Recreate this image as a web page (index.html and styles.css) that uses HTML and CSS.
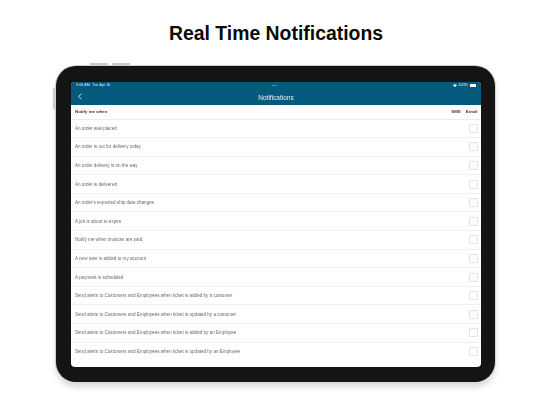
FILE: index.html
```html
<!DOCTYPE html>
<html lang="en">
<head>
<meta charset="utf-8">
<title>Real Time Notifications</title>
<link rel="stylesheet" href="styles.css">
</head>
<body>
<main class="page">
  <h1 class="title">Real Time Notifications</h1>
  <div class="device">
    <span class="btn btn-top-a"></span>
    <span class="btn btn-top-b"></span>
    <span class="btn btn-side"></span>
    <div class="screen">
      <header class="appbar">
        <div class="status">
          <span>9:06 AM&nbsp; Tue Apr 16</span>
          <span class="dots">•••</span>
          <span class="status-right">
            <svg class="wifi" viewBox="0 0 10 8"><path d="M5 8 0 2.600C2.900-.4 7.100-.4 10 2.600z"/></svg>
            <span>100%</span>
            <span class="battery"></span>
          </span>
        </div>
        <div class="nav">
          <svg class="back" viewBox="0 0 6 10"><path d="M5 1 1 5l4 4"/></svg>
          <span class="nav-title">Notifications</span>
        </div>
      </header>
      <div class="thead">
        <span class="thead-label">Notify me when</span>
        <span class="thead-sms">SMS</span>
        <span class="thead-email">Email</span>
      </div>
      <ul class="rows">
        <li class="row"><span>An order was placed</span><i class="check"></i></li>
        <li class="row"><span>An order is out for delivery today</span><i class="check"></i></li>
        <li class="row"><span>An order delivery is on the way</span><i class="check"></i></li>
        <li class="row"><span>An order is delivered</span><i class="check"></i></li>
        <li class="row"><span>An order's expected ship date changes</span><i class="check"></i></li>
        <li class="row"><span>A job is about to expire</span><i class="check"></i></li>
        <li class="row"><span>Notify me when invoices are paid.</span><i class="check"></i></li>
        <li class="row"><span>A new user is added to my account</span><i class="check"></i></li>
        <li class="row"><span>A payment is scheduled</span><i class="check"></i></li>
        <li class="row"><span>Send alerts to Customers and Employees when ticket is added by a customer</span><i class="check"></i></li>
        <li class="row"><span>Send alerts to Customers and Employees when ticket is updated by a customer</span><i class="check"></i></li>
        <li class="row"><span>Send alerts to Customers and Employees when ticket is added by an Employee</span><i class="check"></i></li>
        <li class="row"><span>Send alerts to Customers and Employees when ticket is updated by an Employee</span><i class="check"></i></li>
      </ul>
    </div>
  </div>
</main>
</body>
</html>
```
FILE: styles.css
```css
* { box-sizing: border-box; margin: 0; padding: 0; }
html, body { width: 552px; height: 414px; overflow: hidden; background: #fff; }
body { font-family: "Liberation Sans", Arial, sans-serif; color: #111; }
.page { display: flex; flex-direction: column; align-items: center; height: 414px; }
.title { font-size: 19.400px; line-height: 24px; font-weight: 700; color: #0b0b0b; margin-top: 21px; }
.device {
  position: relative;
  width: 439px; height: 316px; margin: 21px 1px 0 0;
  padding: 16px 14px 15px 15px;
  background: #141414;
  border-radius: 20px;
  box-shadow: 0 -1px 0 0 #cfcfcf, -1px 0 0 0 #cfcfcf, 1px 0 0 0 #d6d6d6, 0 5px 6px 0 rgba(0,0,0,.16);
}
.btn { position: absolute; background: #cacaca; }
.btn-top-a { left: 34px; top: -3px; width: 18px; height: 2px; }
.btn-top-b { left: 56px; top: -3px; width: 18px; height: 2px; }
.btn-side { left: -3px; top: 22px; width: 2px; height: 21px; }
.screen {
  display: flex; flex-direction: column;
  height: 100%; background: #fff; border-radius: 4px; overflow: hidden;
  filter: blur(.35px);
}
.appbar { height: 23px; background: #045a7c; color: #dfeaef; flex: none; }
.status { display: flex; justify-content: space-between; align-items: center; height: 7px; padding: 0 5px; font-size: 3.800px; line-height: 5px; position: relative; }
.dots { position: absolute; left: 201px; font-size: 4px; letter-spacing: .3px; color: #9fc0cd; }
.status-right { display: flex; align-items: center; gap: 1.500px; }
.wifi { width: 4px; height: 3.200px; fill: #fff; }
.battery { width: 6.500px; height: 3px; background: #fff; border-radius: .5px; }
.nav { position: relative; display: flex; align-items: center; justify-content: center; height: 16px; }
.back { position: absolute; left: 6.500px; top: 4px; width: 4px; height: 7px; fill: none; stroke: #fff; stroke-width: 1.300; }
.nav-title { font-size: 6.500px; color: #e8f0f4; }
.thead {
  display: flex; align-items: center; flex: none;
  height: 14.500px; padding: 0 3.500px 0 4px;
  font-size: 4.400px; font-weight: 700; color: #3a3a3a;
  border-bottom: 1px solid #ececec;
}
.thead-label { flex: 1; }
.thead-sms { margin-right: 5px; }
.rows { list-style: none; flex: 1; display: flex; flex-direction: column; }
.row {
  display: flex; align-items: center; justify-content: space-between;
  height: 18.600px; flex: none; padding: 0 3.500px 0 4px;
  font-size: 4.580px; color: #6a6a6a;
  border-bottom: 1px solid #efefef;
}
.row:last-child { border-bottom: 0; }
.check { display: block; width: 9px; height: 9px; border: 1px solid #e2e2e2; border-radius: 1px; background: #fff; }
```
